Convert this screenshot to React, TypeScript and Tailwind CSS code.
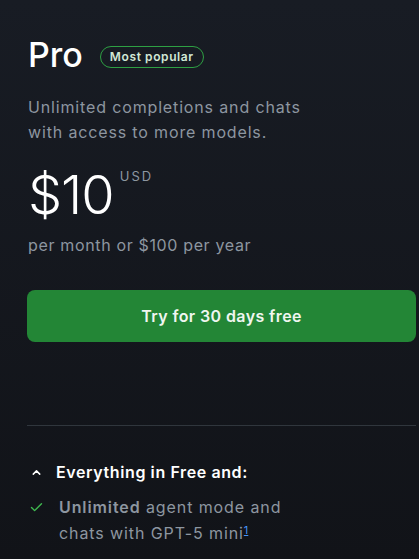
import { Check, ChevronUp } from "lucide-react";

export default function App() {
  return (
    <div className="min-h-[559px] w-full bg-gradient-to-b from-[#181c24] to-[#111318] pl-[27px] pr-[3px] pt-[38px] font-['Inter',sans-serif] text-white">
      <div className="flex items-center gap-[17px] pl-[1px]">
        <h2 className="text-[34px] font-medium leading-[34px]">Pro</h2>
        <span className="mt-[3px] inline-flex h-[22px] items-center rounded-full border border-[#2ea043] px-[9px] text-[12px] font-semibold tracking-[0.6px] text-[#d2e8d6]">
          Most popular
        </span>
      </div>

      <p className="mt-[23px] max-w-[300px] pl-[1px] text-[16px] leading-[25px] tracking-[0.85px] text-[#8d96a0]">
        Unlimited completions and chats with access to more models.
      </p>

      <div className="mt-[22px] flex items-start pl-[1px]">
        <span className="text-[54px] font-light leading-[56px] tracking-[-1px]">$10</span>
        <span className="ml-[6px] mt-[1px] text-[13px] leading-[16px] tracking-[2px] text-[#8d96a0]">USD</span>
      </div>

      <p className="mt-[10px] pl-[1px] text-[16px] leading-[24px] tracking-[0.65px] text-[#8d96a0]">
        per month or $100 per year
      </p>

      <button
        type="button"
        className="mt-[33px] flex h-[52px] w-full items-center justify-center rounded-[8px] bg-[#238636] text-[16px] font-semibold tracking-[0.4px] text-[#f0f6f0]"
      >
        Try for 30 days free
      </button>

      <div className="mt-[83px] h-px w-full bg-[#30363d]" />

      <div className="mt-[34px] flex items-center gap-[13px] pl-[3px]">
        <ChevronUp className="h-[13px] w-[13px] text-white" strokeWidth={2.75} />
        <span className="text-[16px] font-semibold leading-[24px] tracking-[0.6px]">Everything in Free and:</span>
      </div>

      <div className="mt-[10px] flex items-start gap-[15px] pl-[2px]">
        <Check className="mt-[6px] h-[15px] w-[15px] shrink-0 text-[#3fb950]" strokeWidth={2.25} />
        <p className="max-w-[240px] text-[16px] leading-[26px] tracking-[0.9px] text-[#8d96a0]">
          <span className="font-semibold">Unlimited</span> agent mode and chats with GPT-5 mini
          <sup className="text-[11px] leading-none tracking-normal text-[#4493f8] underline">1</sup>
        </p>
      </div>
    </div>
  );
}
